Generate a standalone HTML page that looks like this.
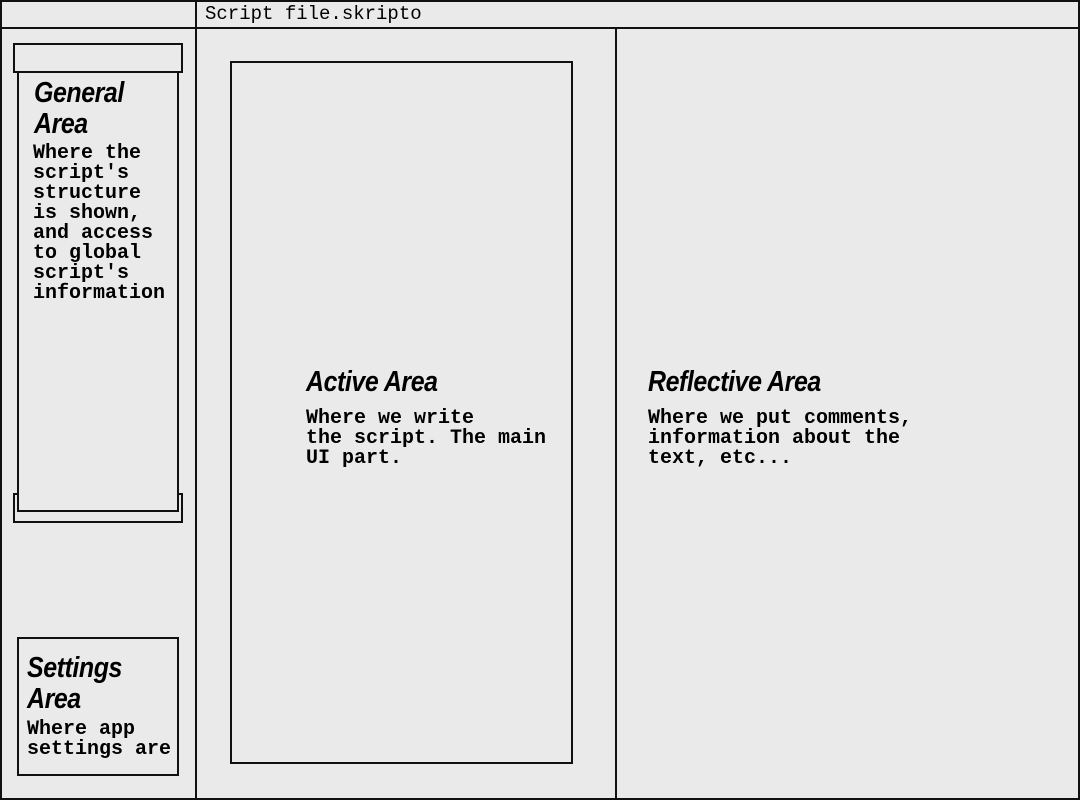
<!DOCTYPE html>
<html><head><meta charset="utf-8"><style>
body{margin:0;width:1080px;height:800px;background:#eaeaea;position:relative;overflow:hidden}
div{position:absolute;box-sizing:border-box}
.b{border:2px solid #111}
.h{font-family:"Liberation Sans",sans-serif;font-style:italic;font-weight:bold;font-size:29px;line-height:31px;color:#000;letter-spacing:-0.5px;transform:scaleX(0.86);transform-origin:0 0;white-space:nowrap}
.m{font-family:"Liberation Mono",monospace;font-weight:bold;font-size:20px;line-height:20px;color:#000;white-space:pre}
</style></head><body>
<div class="b" style="left:0;top:0;width:1080px;height:800px"></div>
<div style="left:0;top:27px;width:1080px;height:2px;background:#111"></div>
<div style="left:195px;top:0;width:2px;height:800px;background:#111"></div>
<div style="left:615px;top:28px;width:2px;height:772px;background:#111"></div>
<div style="left:205px;top:3px;font-family:'Liberation Mono',monospace;font-size:19px;line-height:22px">Script file.skripto</div>
<div class="b" style="left:13px;top:493px;width:170px;height:30px;background:#eaeaea"></div>
<div class="b" style="left:17px;top:60px;width:162px;height:452px;background:#eaeaea"></div>
<div class="b" style="left:13px;top:43px;width:170px;height:30px;background:#eaeaea"></div>
<div class="h" style="left:34px;top:78px">General<br>Area</div>
<div class="m" style="left:33px;top:144px">Where the
script's
structure
is shown,
and access
to global
script's
information</div>
<div class="b" style="left:17px;top:637px;width:162px;height:139px"></div>
<div class="h" style="left:27px;top:653px">Settings<br>Area</div>
<div class="m" style="left:27px;top:720px">Where app
settings are</div>
<div class="b" style="left:230px;top:61px;width:343px;height:703px"></div>
<div class="h" style="left:306px;top:367px">Active Area</div>
<div class="m" style="left:306px;top:409px">Where we write
the script. The main
UI part.</div>
<div class="h" style="left:648px;top:367px">Reflective Area</div>
<div class="m" style="left:648px;top:409px">Where we put comments,
information about the
text, etc...</div>
</body></html>
